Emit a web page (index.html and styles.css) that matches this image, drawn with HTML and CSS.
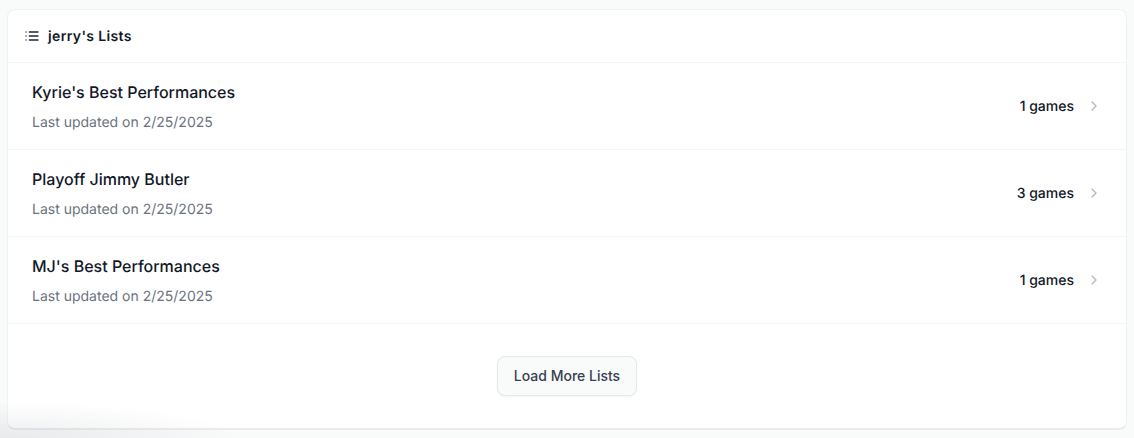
FILE: index.html
```html
<!DOCTYPE html>
<html lang="en">
<head>
    <meta charset="UTF-8">
    <meta name="viewport" content="width=device-width, initial-scale=1.0">
    <title>jerry's Lists</title>
    <link rel="stylesheet" href="styles.css">
</head>
<body>

<div class="card">
    <div class="card-header">
        <svg class="list-icon" width="16" height="16" viewBox="0 0 24 24" fill="none" stroke="currentColor" stroke-width="2" stroke-linecap="round" stroke-linejoin="round">
            <path d="M8 6h13"/><path d="M8 12h13"/><path d="M8 18h13"/><path d="M3 6h.01"/><path d="M3 12h.01"/><path d="M3 18h.01"/>
        </svg>
        <h2>jerry's Lists</h2>
    </div>

    <a class="list-row" href="#">
        <div class="row-left">
            <h3>Kyrie's Best Performances</h3>
            <p>Last updated on 2/25/2025</p>
        </div>
        <div class="row-right">
            <span class="count">1 games</span>
            <svg class="chevron" width="16" height="16" viewBox="0 0 24 24" fill="none" stroke="currentColor" stroke-width="2" stroke-linecap="round" stroke-linejoin="round"><path d="m9 18 6-6-6-6"/></svg>
        </div>
    </a>
    <a class="list-row" href="#">
        <div class="row-left">
            <h3>Playoff Jimmy Butler</h3>
            <p>Last updated on 2/25/2025</p>
        </div>
        <div class="row-right">
            <span class="count">3 games</span>
            <svg class="chevron" width="16" height="16" viewBox="0 0 24 24" fill="none" stroke="currentColor" stroke-width="2" stroke-linecap="round" stroke-linejoin="round"><path d="m9 18 6-6-6-6"/></svg>
        </div>
    </a>
    <a class="list-row" href="#">
        <div class="row-left">
            <h3>MJ's Best Performances</h3>
            <p>Last updated on 2/25/2025</p>
        </div>
        <div class="row-right">
            <span class="count">1 games</span>
            <svg class="chevron" width="16" height="16" viewBox="0 0 24 24" fill="none" stroke="currentColor" stroke-width="2" stroke-linecap="round" stroke-linejoin="round"><path d="m9 18 6-6-6-6"/></svg>
        </div>
    </a>

    <div class="card-footer">
        <button class="load-more">Load More Lists</button>
    </div>
</div>

<div class="corner-shade"></div>

</body>
</html>
```

FILE: styles.css
```css
html, body {
    height: 438px;
    overflow: hidden;
}
body {
    margin: 0;
    padding: 9px 7px 0 7px;
    box-sizing: border-box;
    font-family: Inter, "Noto Sans", sans-serif;
    text-rendering: geometricPrecision;
    background-color: #f9fafa;
    color: #111827;
}
.card {
    background-color: white;
    border: 1px solid #f0f1f2;
    border-bottom: 2px solid #e9ebec;
    border-radius: 8px;
    height: 421px;
    box-sizing: border-box;
}
.card-header {
    display: flex;
    align-items: center;
    gap: 8px;
    height: 52px;
    padding: 0 16px;
    border-bottom: 1px solid #f3f4f6;
}
.card-header h2 {
    margin: 0;
    font-size: 14px;
    font-weight: 600;
    letter-spacing: 0.025em;
    color: #111827;
}
.list-icon {
    color: #1f2937;
}
.list-row {
    display: flex;
    align-items: center;
    justify-content: space-between;
    height: 87px;
    box-sizing: border-box;
    padding: 0 24px;
    border-bottom: 1px solid #f3f4f6;
    text-decoration: none;
    color: inherit;
}
.row-left {
    padding-top: 1px;
}
.list-row h3 {
    margin: 0 0 9px;
    font-size: 16px;
    line-height: 24px;
    font-weight: 450;
    color: #111827;
}
.list-row p {
    margin: 0;
    font-size: 14px;
    line-height: 20px;
    color: #6b7280;
}
.row-right {
    display: flex;
    align-items: center;
    gap: 12px;
}
.count {
    padding-top: 2px;
    font-size: 14px;
    line-height: 20px;
    font-weight: 450;
    color: #111827;
}
.chevron {
    color: #b4b9c1;
}
.card-footer {
    display: flex;
    justify-content: center;
    padding-top: 32px;
}
.load-more {
    width: 140px;
    height: 40px;
    padding-bottom: 2px;
    font-family: inherit;
    font-size: 14px;
    font-weight: 450;
    color: #374151;
    background-color: #f9fafa;
    border: 1px solid #e5e7eb;
    border-radius: 8px;
    box-shadow: 0 1px 2px rgba(0,0,0,0.05);
}
.corner-shade {
    position: absolute;
    left: 0;
    bottom: 0;
    width: 260px;
    height: 50px;
    pointer-events: none;
    background: radial-gradient(ellipse 240px 36px at 0 100%, rgba(107,114,128,0.12), rgba(107,114,128,0));
}
```
